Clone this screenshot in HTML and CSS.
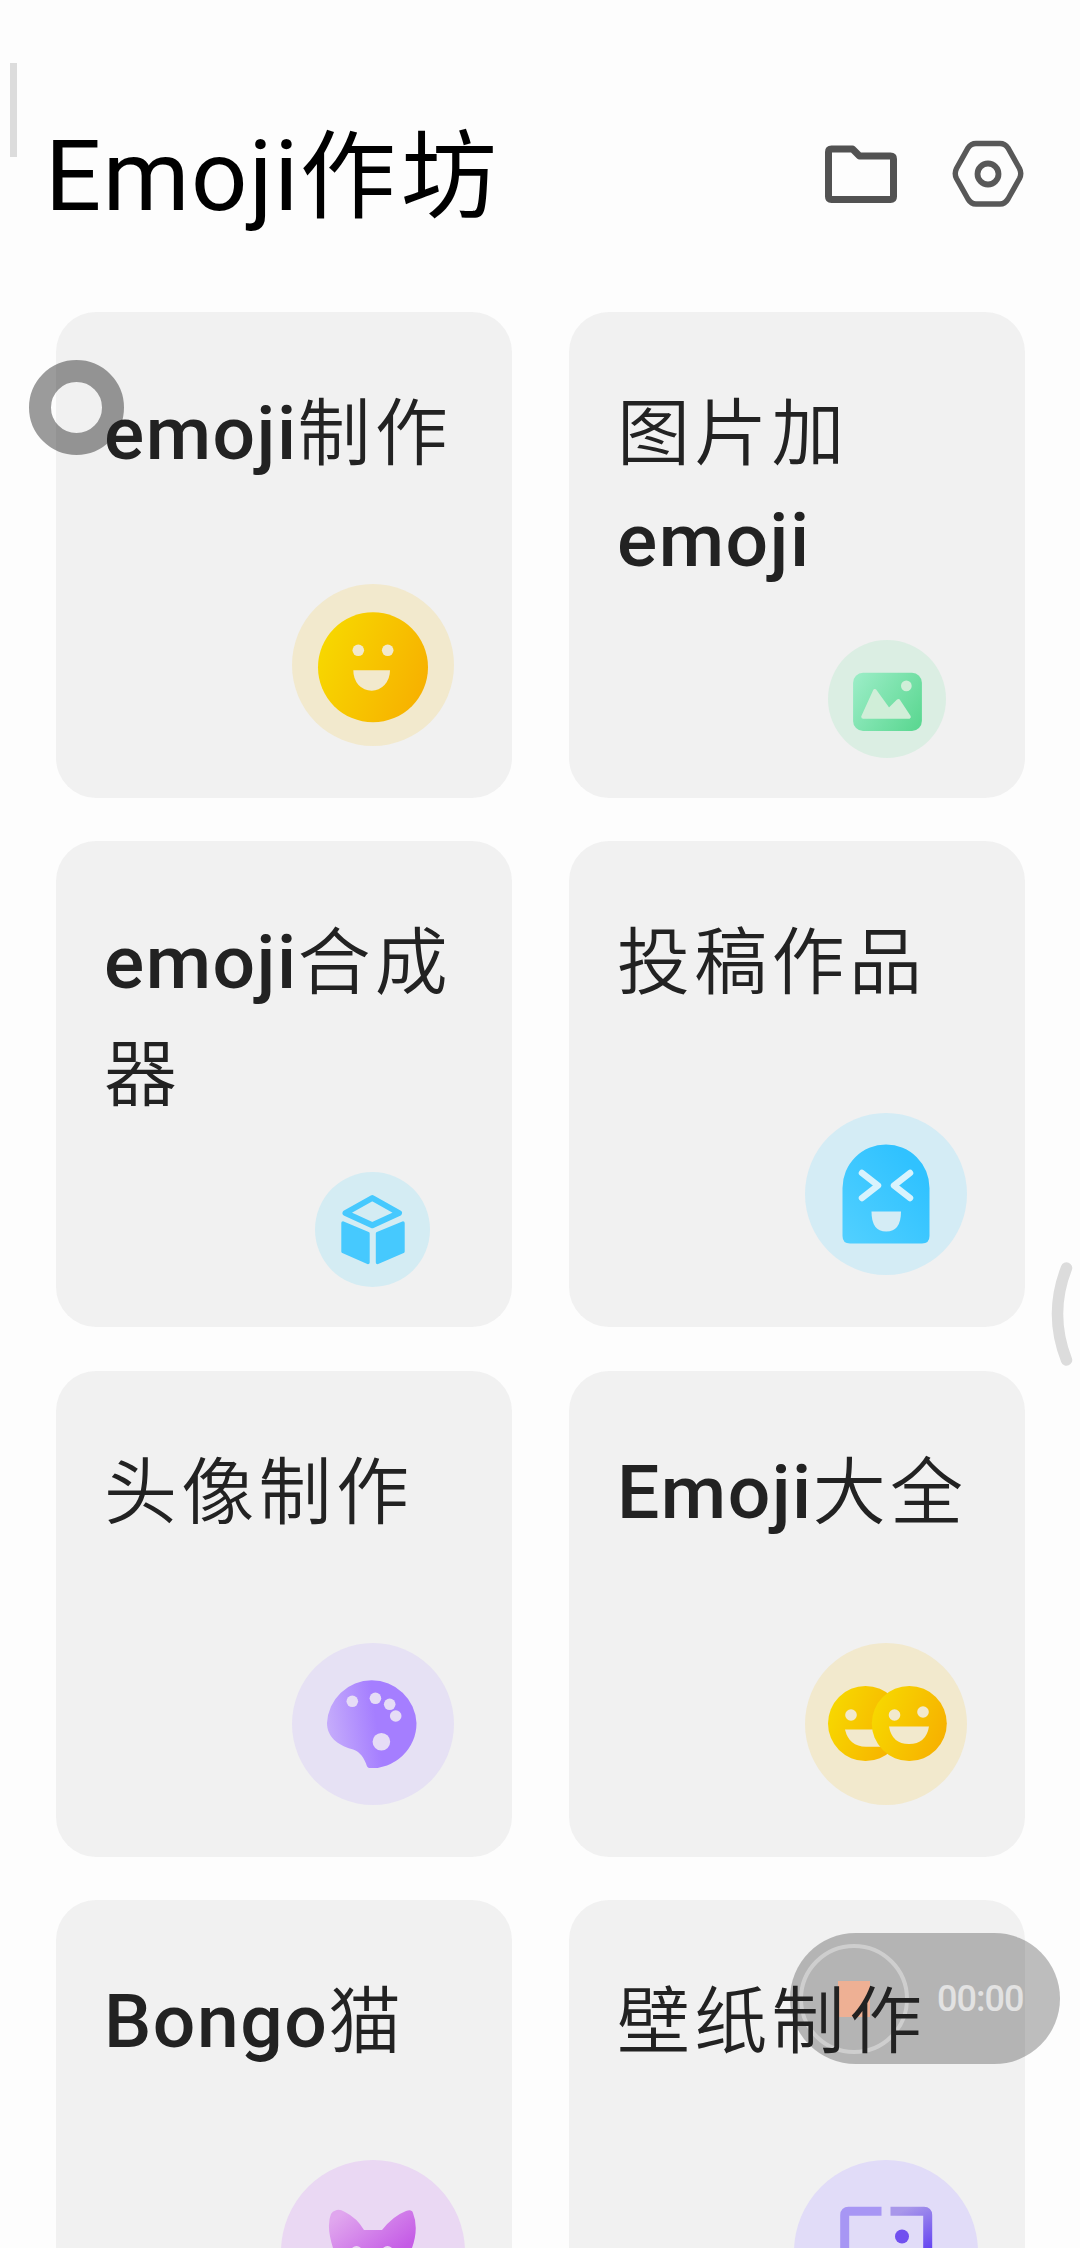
FILE: index.html
```html
<!DOCTYPE html>
<html lang="zh-CN">
<head>
  <meta charset="UTF-8" />
  <meta name="viewport" content="width=device-width, initial-scale=1" />
  <title>Emoji作坊</title>
  <link rel="stylesheet" href="styles.css">
</head>
<body>

  <header class="header">
    <h1><span>Emoji</span>作坊</h1>
    <div class="actions">
      <svg class="folder" viewBox="0 0 72 58" width="72" height="58">
        <path d="M6.5 4H27.5L34.5 11H65.5Q68.5 11 68.5 14V51.5Q68.5 54.5 65.5 54.5H6.5Q3.5 54.5 3.5 51.5V7Q3.5 4 6.5 4Z" fill="none" stroke="#525252" stroke-width="7" stroke-linejoin="round"/>
      </svg>
      <svg class="settings" viewBox="0 0 72 68" width="72" height="68">
        <path d="M24 3.5H48Q53 3.5 56 8L67.5 28.5Q70 33.5 67.5 38.5L56 59Q53 64 48 64H24Q19 64 16 59L4.5 38.5Q2 33.5 4.5 28.5L16 8Q19 3.5 24 3.5Z" fill="none" stroke="#585858" stroke-width="5.4"/>
        <circle cx="36" cy="34" r="10.500" fill="none" stroke="#585858" stroke-width="5.8"/>
      </svg>
    </div>
  </header>

  <main class="grid">
    <a class="card">
      <h2><b>emoji</b>制作</h2>
      <svg class="icon" viewBox="0 0 162 162" width="162" height="162">
        <defs>
          <linearGradient id="yellow" x1="0" y1="0.3" x2="1" y2="0.7">
            <stop offset="0" stop-color="#f7d800"/>
            <stop offset="1" stop-color="#f7b000"/>
          </linearGradient>
        </defs>
        <circle cx="81" cy="81" r="81" fill="#f2e9cd"/>
        <circle cx="81" cy="83.3" r="55" fill="url(#yellow)"/>
        <circle cx="66.3" cy="66.3" r="5.8" fill="#f2e9cd"/>
        <circle cx="95.7" cy="66.3" r="5.8" fill="#f2e9cd"/>
        <path d="M61.3 86.3H98Q98 95 92.5 101Q87 106.7 79.7 106.7Q72 106.7 66.5 101Q61.3 95 61.3 86.3Z" fill="#f2e9cd"/>
      </svg>
    </a>

    <a class="card">
      <h2>图片加<b>emoji</b></h2>
      <svg class="icon small" viewBox="0 0 119 119" width="118" height="118">
        <defs>
          <linearGradient id="green" x1="0" y1="0.2" x2="1" y2="0.8">
            <stop offset="0" stop-color="#98ecc4"/>
            <stop offset="1" stop-color="#5dd893"/>
          </linearGradient>
        </defs>
        <circle cx="59.5" cy="59.5" r="59.5" fill="#dbeee3"/>
        <rect x="25.3" y="33" width="69.4" height="58.7" rx="10" fill="url(#green)"/>
        <circle cx="79" cy="46.3" r="5.4" fill="#d0eed8"/>
        <path d="M47.3 51.5L61.3 71L71 61.5L81.5 77.5H35.5Z" fill="#d0eed8" stroke="#d0eed8" stroke-width="4" stroke-linejoin="round"/>
      </svg>
    </a>

    <a class="card">
      <h2 class="two-line"><b>emoji</b>合成器</h2>
      <svg class="icon cube" viewBox="0 0 115 115" width="115" height="115">
        <circle cx="57.5" cy="57.5" r="57.5" fill="#d4ecf3"/>
        <path d="M57.3 26L84 41L57.3 53.3L30.5 41Z" fill="none" stroke="#46c9fe" stroke-width="6" stroke-linejoin="round"/>
        <path d="M28 51L53 61.5V90.5L28 79.5Z" fill="#46c9fe" stroke="#46c9fe" stroke-width="3.4" stroke-linejoin="round"/>
        <path d="M88 51L62.5 61.5V90.5L88 79.5Z" fill="#46c9fe" stroke="#46c9fe" stroke-width="3.4" stroke-linejoin="round"/>
      </svg>
    </a>

    <a class="card">
      <h2>投稿作品</h2>
      <svg class="icon" viewBox="0 0 162 162" width="162" height="162">
        <defs>
          <linearGradient id="blue" x1="0" y1="1" x2="0.8" y2="0.2">
            <stop offset="0" stop-color="#52d0ff"/>
            <stop offset="1" stop-color="#30c2ff"/>
          </linearGradient>
        </defs>
        <circle cx="81" cy="81" r="81" fill="#d4ecf5"/>
        <path d="M37.5 75A43.5 43.5 0 0 1 124.500 75V123Q124.5 130.5 117 130.5H45Q37.5 130.5 37.5 123Z" fill="url(#blue)"/>
        <path d="M57 60L73 72.5L57 85M105 60L89 72.5L105 85" fill="none" stroke="#d8f3fd" stroke-width="6.500" stroke-linecap="round" stroke-linejoin="round"/>
        <path d="M66.5 98.5H96Q96 118.5 81.2 118.5Q66.5 118.5 66.5 98.5Z" fill="#d4ecf5"/>
      </svg>
    </a>

    <a class="card">
      <h2>头像制作</h2>
      <svg class="icon" viewBox="0 0 162 162" width="162" height="162">
        <defs>
          <linearGradient id="violet" x1="0" y1="0.6" x2="0.7" y2="0.5">
            <stop offset="0" stop-color="#c6adfb"/>
            <stop offset="0.8" stop-color="#a57eff"/>
          </linearGradient>
        </defs>
        <circle cx="81" cy="81" r="81" fill="#e6e1f4"/>
        <path d="M77 125Q75 124.5 74 120.5C70.5 111.5 66 108 59.5 106C45 102 35 93 35 80A44.8 44.8 0 0 1 124.500 80A44.8 44.8 0 0 1 77 125Z" fill="url(#violet)"/>
        <g fill="#e6dcf6">
          <circle cx="60.3" cy="58.3" r="5.8"/>
          <circle cx="83.4" cy="55.3" r="5.8"/>
          <circle cx="97.7" cy="61.3" r="5.8"/>
          <circle cx="103.7" cy="73" r="5.8"/>
          <circle cx="89.4" cy="98.7" r="8.8"/>
        </g>
      </svg>
    </a>

    <a class="card">
      <h2><b>Emoji</b>大全</h2>
      <svg class="icon" viewBox="0 0 162 162" width="162" height="162">
        <circle cx="81" cy="81" r="81" fill="#f2e9cd"/>
        <circle cx="60.5" cy="80.5" r="37.5" fill="url(#yellow)"/>
        <circle cx="46" cy="72" r="5.8" fill="#f2e9cd"/>
        <path d="M40 86.5H81V103.7H61Q44 103.7 40 86.5Z" fill="#f2e9cd"/>
        <circle cx="104.3" cy="80.5" r="37.5" fill="url(#yellow)"/>
        <circle cx="89.5" cy="72" r="5.8" fill="#f2e9cd"/>
        <circle cx="118" cy="69" r="5.8" fill="#f2e9cd"/>
        <path d="M84 83.5H124Q121 101 104 101Q87 101 84 83.5Z" fill="#f2e9cd"/>
      </svg>
    </a>

    <a class="card">
      <h2><b>Bongo</b>猫</h2>
      <svg class="icon large" viewBox="0 0 184 184" width="184" height="184">
        <defs>
          <linearGradient id="pink" x1="0.2" y1="0" x2="0.7" y2="0.6">
            <stop offset="0" stop-color="#e0a6ee"/>
            <stop offset="1" stop-color="#c55ce6"/>
          </linearGradient>
        </defs>
        <circle cx="92" cy="92" r="92" fill="#ead8f3"/>
        <path d="M54.5 50.5Q58 48.5 64 52Q76 58 83 70H101Q112 56 125 51Q131 49 132 53Q138 68 131 88Q140 130 92 132Q44 130 52 88Q45 66 50 54Q51.5 51 54.5 50.5Z" fill="url(#pink)"/>
        <circle cx="75.5" cy="91.5" r="5.5" fill="#ead8f3"/>
        <circle cx="106.5" cy="91.5" r="5.5" fill="#ead8f3"/>
      </svg>
    </a>

    <a class="card">
      <h2>壁纸制作</h2>
      <svg class="icon large" viewBox="0 0 184 184" width="184" height="184">
        <defs>
          <linearGradient id="indigo" gradientUnits="userSpaceOnUse" x1="110" y1="50" x2="132" y2="92">
            <stop offset="0" stop-color="#a897ea"/>
            <stop offset="1" stop-color="#6444f2"/>
          </linearGradient>
        </defs>
        <circle cx="92" cy="92" r="92" fill="#e1dcf8"/>
        <path d="M50.7 92V55Q50.7 51.3 54.5 51.3H87.5" fill="none" stroke="#a796f4" stroke-width="9"/>
        <path d="M96.5 51.3H130Q133.7 51.3 133.7 55V92" fill="none" stroke="url(#indigo)" stroke-width="9"/>
        <circle cx="108" cy="76.5" r="7" fill="#7150ef"/>
      </svg>
    </a>
  </main>

  <!-- system overlays -->
  <div class="edge-bar"></div>
  <div class="touch-ring"></div>
  <svg class="edge-handle" viewBox="0 0 22 104" width="22" height="104">
    <path d="M15.5 6Q-2.5 52 15.5 98" fill="none" stroke="#dcdcdc" stroke-width="11.500" stroke-linecap="round"/>
  </svg>
  <div class="recorder">
    <span class="stop"><i></i></span>
    <span class="time">00:00</span>
  </div>

</body>
</html>
```
FILE: styles.css
```css
* {
  box-sizing: border-box;
}
body {
  margin: 0;
  height: 2248px;
  overflow: hidden;
  position: relative;
  background: #fdfdfd;
  color: #222;
  font-family: 'Noto Sans CJK SC', sans-serif;
}
.header {
  display: flex;
  align-items: center;
  justify-content: space-between;
  height: 312px;
  padding: 0 56px 0 45px;
}
h1 {
  margin: 26px 0 0;
  color: #000;
  font-size: 96px;
  font-weight: 400;
  line-height: 140px;
  letter-spacing: 5px;
}
h1 span {
  font-family: Roboto, sans-serif;
  font-size: 99px;
  line-height: 1;
  letter-spacing: 1.5px;
}
.actions {
  display: flex;
  align-items: center;
  gap: 55px;
  margin-top: 35px;
}
.grid {
  display: grid;
  grid-template-columns: 456px 456px;
  grid-auto-rows: 486px;
  gap: 43.4px 57px;
  padding-left: 56px;
}
.card {
  display: flex;
  flex-direction: column;
  padding: 62px 0 52px 48px;
  border-radius: 40px;
  background: #f1f1f1;
}
/* titles stay readable above the floating overlays */
h2 {
  position: relative;
  z-index: 2;
  width: 365px;
  margin: 0;
  font-size: 73px;
  font-weight: 350;
  line-height: 107px;
  letter-spacing: 4.3px;
}
h2 b {
  font-family: Roboto, sans-serif;
  font-size: 75px;
  font-weight: 500;
  line-height: 1;
  letter-spacing: 1.5px;
}
.two-line {
  line-height: 112px;
  margin-top: -3px;
}
.icon {
  align-self: flex-end;
  margin: auto 58px 0 0;
}
.icon.small {
  margin-right: 79px;
  margin-bottom: -12px;
}
.icon.cube {
  margin-right: 82px;
  margin-bottom: -12px;
}
.icon.large {
  margin-right: 47px;
  margin-bottom: -10px;
}

.edge-bar {
  position: absolute;
  left: 10px;
  top: 63px;
  width: 7px;
  height: 94px;
  background: #dcdcdc;
}
.touch-ring {
  position: absolute;
  left: 29px;
  top: 360px;
  width: 95px;
  height: 95px;
  border: 22px solid rgba(0, 0, 0, 0.39);
  border-radius: 50%;
}
.edge-handle {
  position: absolute;
  left: 1051px;
  top: 1262px;
}
.recorder {
  position: absolute;
  z-index: 1;
  left: 790px;
  top: 1933px;
  display: flex;
  align-items: center;
  gap: 28px;
  width: 270px;
  height: 131px;
  padding-left: 9px;
  border-radius: 66px;
  background: rgba(0, 0, 0, 0.25);
}
.stop {
  display: flex;
  align-items: center;
  justify-content: center;
  width: 110px;
  height: 110px;
  border: 4px solid rgba(255, 255, 255, 0.35);
  border-radius: 50%;
}
.stop i {
  width: 32px;
  height: 36px;
  background: #eeb094;
}
.time {
  color: #e2e2e2;
  font-family: Roboto, sans-serif;
  font-size: 36px;
  font-weight: 500;
  letter-spacing: -1px;
}
```
